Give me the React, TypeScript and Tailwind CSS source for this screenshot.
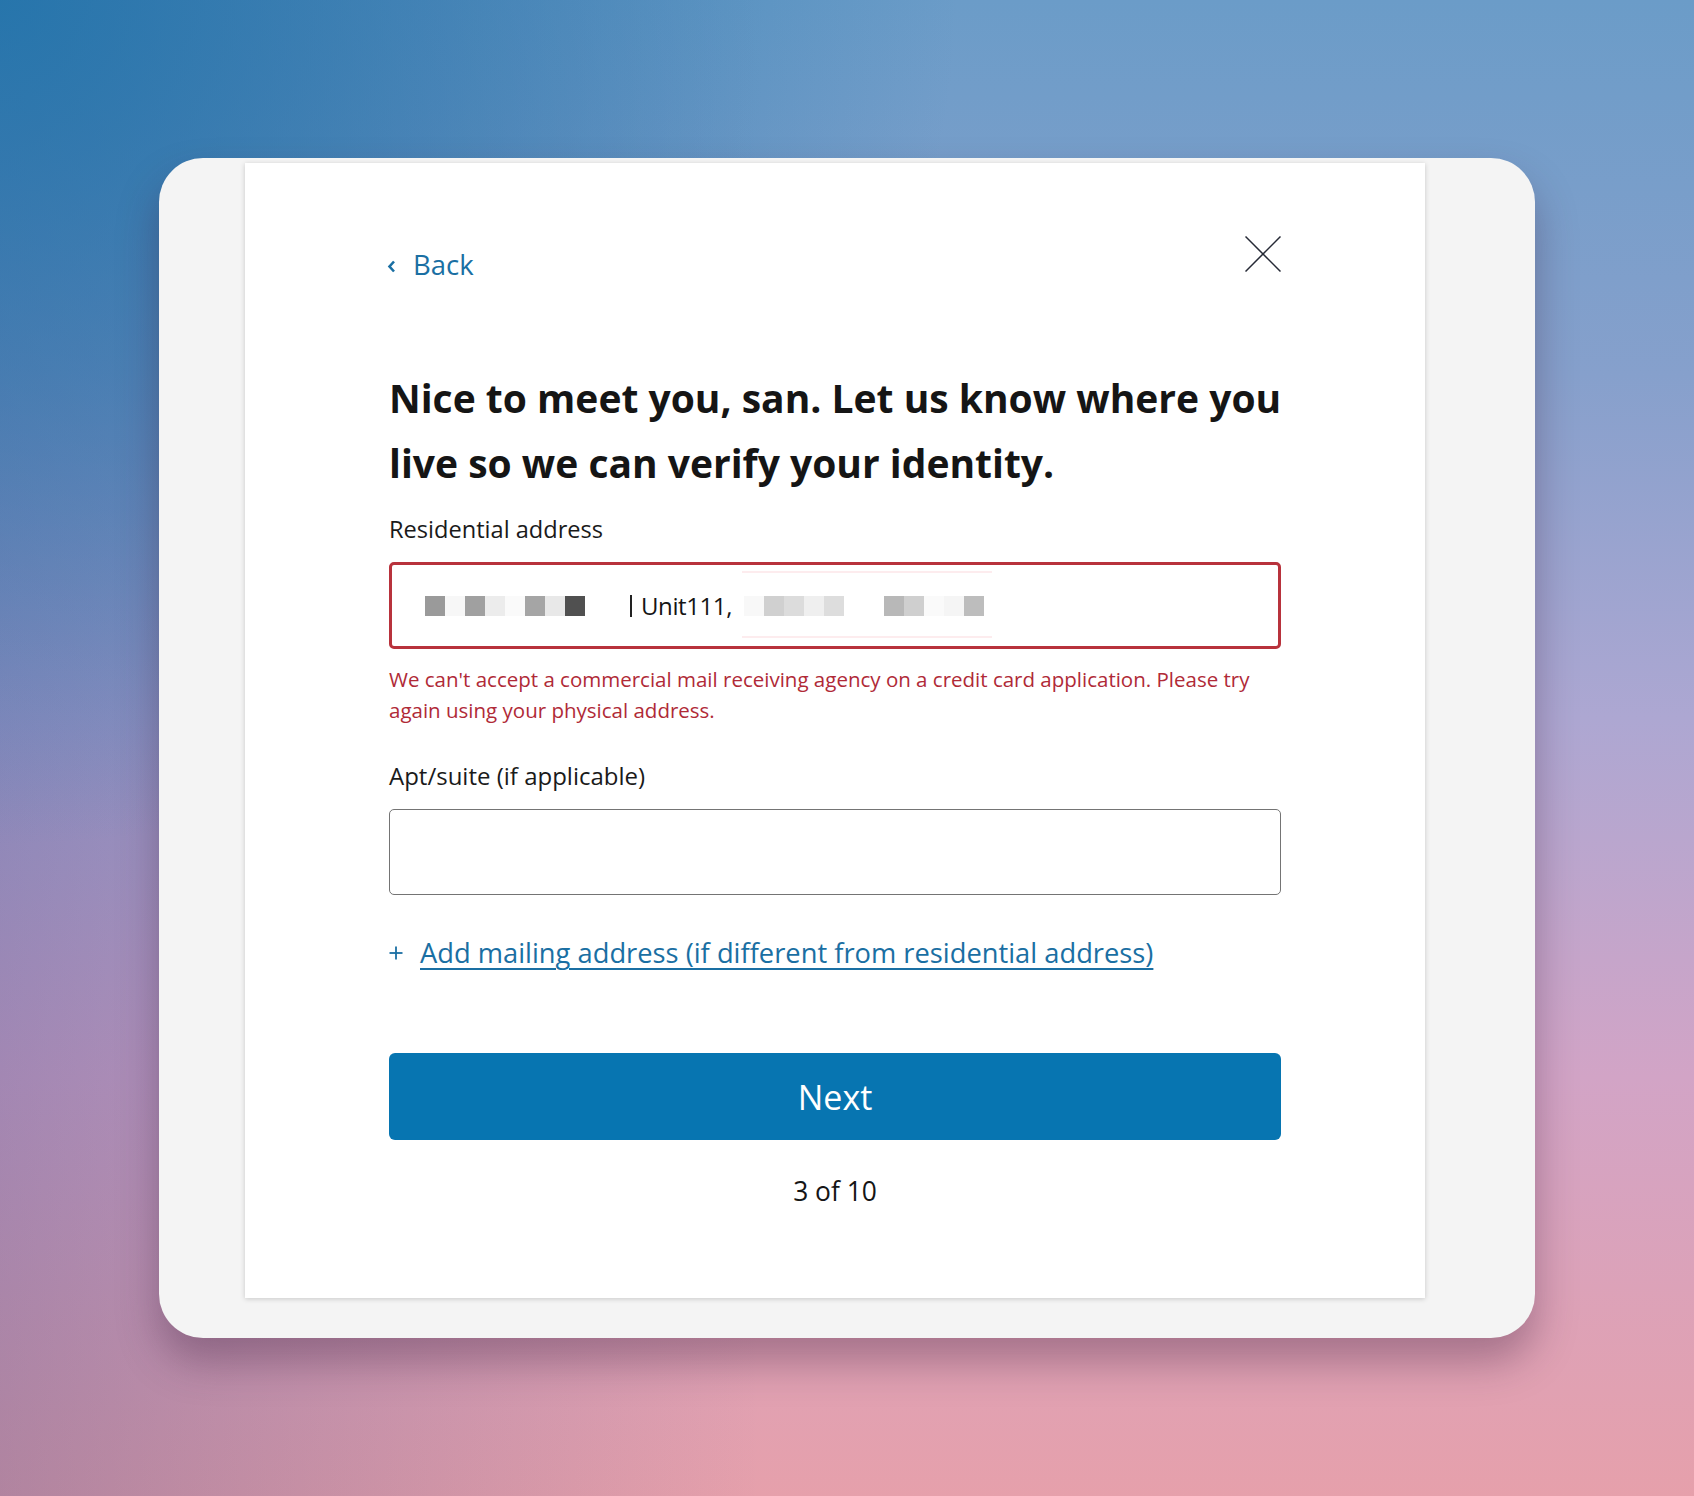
import React from "react";

const leftCells = ["#9a9a9a", "#f7f7f7", "#a0a0a0", "#ececec", "#fafafa", "#a5a5a5", "#e8e8e8", "#505050"];
const rightCells = ["#f8f8f8", "#d0d0d0", "#dcdcdc", "#efefef", "#dddddd", "#ffffff", "#ffffff", "#b8b8b8", "#cfcfcf", "#fafafa", "#f5f5f5", "#bdbdbd"];

export default function App() {
  return (
    <div className="w-full h-[1496px] overflow-hidden [font-family:'Open_Sans',Lato,sans-serif] bg-[radial-gradient(ellipse_at_0%_0%,rgba(30,115,170,0.85),rgba(30,115,170,0)_40%),linear-gradient(to_right,rgba(40,60,130,0.28),rgba(40,60,130,0)_45%),linear-gradient(to_bottom,#6b9cc8_0%,#86a0cc_25%,#ada7d2_48%,#d2a4c6_72%,#e6a0ab_100%)] pt-[158px] pl-[159px]">
      <div className="w-[1376px] h-[1180px] rounded-[44px] bg-[#f4f4f4] shadow-[0_24px_40px_rgba(60,30,60,0.35)] pl-[86px] pt-[5px]">
        <div className="w-[1180px] h-[1135px] bg-white shadow-[0_1px_5px_rgba(0,0,0,0.18)] px-[144px] pt-[73px] flex flex-col">
          {/* Header row */}
          <div className="flex justify-between items-start h-[36px]">
            <div className="flex items-center mt-[13px] h-[32px] text-[#1a6fa3]">
              <svg width="9" height="13" viewBox="0 0 9 13" className="mr-[17px] ml-[-2px] mt-[3px]">
                <polyline points="7,1.5 2.5,6.5 7,11.5" fill="none" stroke="#1a6fa3" strokeWidth="2.6" />
              </svg>
              <span className="text-[27.5px] leading-[32px]">Back</span>
            </div>
            <svg width="36" height="36" viewBox="0 0 36 36">
              <line x1="0.5" y1="0.5" x2="35.5" y2="35.5" stroke="#262a36" strokeWidth="1.5" />
              <line x1="35.5" y1="0.5" x2="0.5" y2="35.5" stroke="#262a36" strokeWidth="1.5" />
            </svg>
          </div>

          {/* Heading */}
          <h1 className="mt-[93px] text-[39px] leading-[65px] font-bold text-[#151515] whitespace-nowrap">
            Nice to meet you, san. Let us know where you
            <br />
            live so we can verify your identity.
          </h1>

          {/* Residential address */}
          <label className="mt-[18px] text-[23.6px] leading-[32px] text-[#1a1a1a]">Residential address</label>
          <div className="mt-[17px] h-[87px] w-[892px] border-[3px] border-[#b8323c] rounded-[5px] flex items-center pl-[33px] relative">
            <div className="absolute left-[350px] top-[6px] w-[250px] h-[2px] bg-[#fdecee]" />
            <div className="absolute left-[350px] bottom-[8px] w-[250px] h-[2px] bg-[#fdecee]" />
            <div className="flex">
              {leftCells.map((c, i) => (
                <div key={i} className="w-[20px] h-[20px]" style={{ backgroundColor: c }} />
              ))}
            </div>
            <div className="ml-[45px] w-[2px] h-[22px] bg-[#222]" />
            <span className="ml-[9px] text-[24px] leading-[30px] tracking-[-0.4px] text-[#151515]">Unit111,</span>
            <div className="flex ml-[12px]">
              {rightCells.map((c, i) => (
                <div key={i} className="w-[20px] h-[20px]" style={{ backgroundColor: c }} />
              ))}
            </div>
          </div>
          <p className="mt-[15px] text-[20.5px] leading-[31px] text-[#b02a37] w-[892px] whitespace-nowrap">
            We can't accept a commercial mail receiving agency on a credit card application. Please try
            <br />
            again using your physical address.
          </p>

          {/* Apt/suite */}
          <label className="mt-[34px] text-[24px] leading-[32px] text-[#1a1a1a]">Apt/suite (if applicable)</label>
          <div className="mt-[17px] h-[86px] w-[892px] border-[1.5px] border-[#747474] rounded-[5px]" />

          {/* Add mailing */}
          <div className="mt-[40px] flex items-center h-[36px] text-[#1a6fa3]">
            <svg width="14" height="14" viewBox="0 0 14 14" className="mr-[17px]">
              <line x1="7" y1="0.5" x2="7" y2="13.5" stroke="#1a6fa3" strokeWidth="1.8" />
              <line x1="0.5" y1="7" x2="13.5" y2="7" stroke="#1a6fa3" strokeWidth="1.8" />
            </svg>
            <span className="text-[27.3px] leading-[36px] whitespace-nowrap underline underline-offset-[5px] decoration-[1.5px]">
              Add mailing address (if different from residential address)
            </span>
          </div>

          {/* Next */}
          <button className="mt-[82px] h-[87px] w-[892px] rounded-[6px] bg-[#0775b1] text-white text-[34px] leading-[40px] flex items-center justify-center">
            Next
          </button>
          <div className="mt-[33px] text-center text-[26.4px] leading-[36px] text-[#151515]">3 of 10</div>
        </div>
      </div>
    </div>
  );
}
